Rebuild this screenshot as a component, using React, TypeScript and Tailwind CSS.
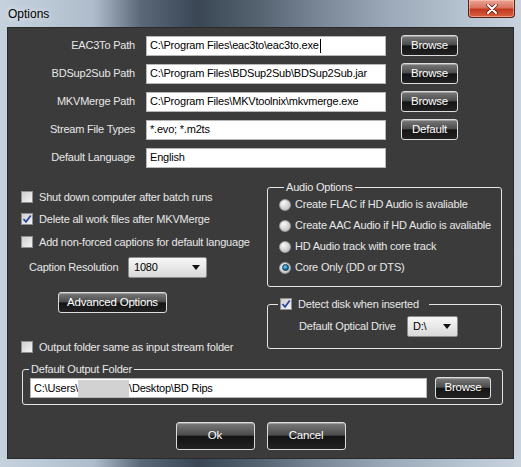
import type { ReactNode } from 'react'

function GlossButton({ children, className = '' }: { children: ReactNode; className?: string }) {
  return (
    <button
      type="button"
      className={`flex items-center justify-center whitespace-nowrap rounded-[3px] border border-[#dcdcdc] bg-[linear-gradient(to_bottom,#7a7a7a_0%,#4c4c4c_46%,#141414_52%,#222222_100%)] text-[11.5px] text-white shadow-[inset_0_1px_0_rgba(255,255,255,0.3)] ${className}`}
    >
      {children}
    </button>
  )
}

function TextBox({ children, className = '' }: { children: ReactNode; className?: string }) {
  return (
    <div
      className={`flex h-[20px] items-center overflow-hidden whitespace-nowrap border border-[#b8b8b8] bg-white pl-[3px] text-black ${className}`}
    >
      {children}
    </div>
  )
}

function CheckBox({ checked = false }: { checked?: boolean }) {
  return (
    <span className="flex h-[12px] w-[12px] shrink-0 items-center justify-center border border-[#8f8f8f] bg-[linear-gradient(135deg,#cfcfcf_0%,#f4f4f4_100%)]">
      {checked && (
        <svg width="10" height="10" viewBox="0 0 10 10">
          <path d="M1.5 5 L4 7.8 L8.8 1.5" fill="none" stroke="#2f46a0" strokeWidth="1.8" />
        </svg>
      )}
    </span>
  )
}

function Radio({ checked = false }: { checked?: boolean }) {
  return (
    <span className="flex h-[12px] w-[12px] shrink-0 items-center justify-center rounded-full border border-[#9a9a9a] bg-[radial-gradient(circle_at_35%_30%,#f8f8f8_0%,#d0d0d0_60%,#b4b4b4_100%)]">
      {checked && (
        <span className="h-[7px] w-[7px] rounded-full border border-[#0b3350] bg-[radial-gradient(circle_at_40%_35%,#7fd0f5_0%,#1a7ab0_55%,#0a3d62_100%)]" />
      )}
    </span>
  )
}

function DropDown({ value, className = '' }: { value: string; className?: string }) {
  return (
    <div
      className={`flex h-[21px] items-center justify-between rounded-[2px] border border-[#8c8c8c] bg-[linear-gradient(to_bottom,#f6f6f6_0%,#e8e8e8_50%,#d8d8d8_100%)] pl-[5px] pr-[6px] text-black ${className}`}
    >
      <span>{value}</span>
      <svg width="8" height="5" viewBox="0 0 8 5">
        <path d="M0 0 H8 L4 5 Z" fill="#111" />
      </svg>
    </div>
  )
}

function PathRow({ label, children, button }: { label: string; children: ReactNode; button?: string }) {
  return (
    <div className="flex h-[21px] items-center">
      <div className="w-[127px] text-right text-[#e8e8e8]">{label}</div>
      <div className="ml-[11px] w-[240px]">
        <TextBox>{children}</TextBox>
      </div>
      {button && <GlossButton className="ml-[15px] h-[21px] w-[57px]">{button}</GlossButton>}
    </div>
  )
}

function CheckRow({ label, checked = false, className = '' }: { label: string; checked?: boolean; className?: string }) {
  return (
    <div className={`flex h-[22px] items-center gap-[6px] text-[#e8e8e8] ${className}`}>
      <CheckBox checked={checked} />
      <span>{label}</span>
    </div>
  )
}

function RadioRow({ label, checked = false }: { label: string; checked?: boolean }) {
  return (
    <div className="flex h-[21px] items-center gap-[4px] text-[#e8e8e8]">
      <Radio checked={checked} />
      <span>{label}</span>
    </div>
  )
}

export default function App() {
  return (
    <div className="h-[467px] w-[521px] overflow-hidden whitespace-nowrap bg-[linear-gradient(to_right,#c6d2de_0%,#aebccb_18%,#5a6878_27%,#3a4654_38%,#566472_50%,#7b8999_62%,#9caab9_75%,#b7c4d1_90%,#c8d3de_100%)] font-['Liberation_Sans',Arial,sans-serif] text-[11px] tracking-[-0.2px]">
      <div className="flex h-[27px] items-start justify-between">
        <div className="pl-[8px] pt-[5px] text-[12px] tracking-normal text-black [text-shadow:0_0_6px_rgba(255,255,255,0.9)]">Options</div>
        <div className="mr-[6px] flex h-[18px] w-[47px] items-center justify-center rounded-b-[4px] border border-t-0 border-[#5b2118] bg-[linear-gradient(to_bottom,#eca596_0%,#d8735f_45%,#c2381f_55%,#d9603e_100%)] shadow-[inset_0_0_0_1px_rgba(255,210,200,0.5)]">
          <svg width="12" height="10" viewBox="0 0 12 10">
            <path d="M2 1 L10 9 M10 1 L2 9" stroke="#5a1a10" strokeWidth="3.4" strokeLinecap="round" />
            <path d="M2 1 L10 9 M10 1 L2 9" stroke="#ffffff" strokeWidth="2" strokeLinecap="round" />
          </svg>
        </div>
      </div>

      <div className="mx-[7px] h-[432px] border border-[#2a2a2a] bg-[#3b3b3b] pt-[7px]">
        <div className="flex flex-col gap-[7px]">
          <PathRow label="EAC3To Path" button="Browse">
            <span>C:\Program Files\eac3to\eac3to.exe</span>
            <span className="ml-px h-[14px] w-px bg-black" />
          </PathRow>
          <PathRow label="BDSup2Sub Path" button="Browse">
            C:\Program Files\BDSup2Sub\BDSup2Sub.jar
          </PathRow>
          <PathRow label="MKVMerge Path" button="Browse">
            C:\Program Files\MKVtoolnix\mkvmerge.exe
          </PathRow>
          <PathRow label="Stream File Types" button="Default">
            *.evo; *.m2ts
          </PathRow>
          <PathRow label="Default Language">English</PathRow>
        </div>

        <div className="mt-[12px] flex">
          <div className="ml-[13px] flex w-[246px] flex-col">
            <CheckRow label="Shut down computer after batch runs" className="mt-[6px]" />
            <CheckRow label="Delete all work files after MKVMerge" checked />
            <CheckRow label="Add non-forced captions for default language" className="mt-px" />
            <div className="mt-[4px] flex h-[21px] items-center text-[#e8e8e8]">
              <span className="ml-[8px] w-[99px]">Caption Resolution</span>
              <DropDown value="1080" className="w-[79px]" />
            </div>
            <GlossButton className="ml-[37px] mt-[14px] h-[21px] w-[109px]">Advanced Options</GlossButton>
            <CheckRow label="Output folder same as input stream folder" className="mt-[23px]" />
          </div>

          <div className="flex w-[235px] flex-col">
            <fieldset className="rounded-[3px] border border-[#e4e4e4] pb-[8px] pl-[11px]">
              <legend className="ml-[5px] px-[2px] leading-[14px] text-[#e8e8e8]">Audio Options</legend>
              <RadioRow label="Create FLAC if HD Audio is avaliable" />
              <RadioRow label="Create AAC Audio if HD Audio is avaliable" />
              <RadioRow label="HD Audio track with core track" />
              <RadioRow label="Core Only (DD or DTS)" checked />
            </fieldset>
            <fieldset className="mt-[10px] rounded-[3px] border border-[#e4e4e4] pb-[11px]">
              <legend className="ml-[10px] flex items-center gap-[6px] px-[2px] leading-[14px] text-[#e8e8e8]">
                <CheckBox checked />
                <span className="pr-[8px]">Detect disk when inserted</span>
              </legend>
              <div className="mt-[5px] flex h-[21px] items-center text-[#e8e8e8]">
                <span className="ml-[31px] w-[108px]">Default Optical Drive</span>
                <DropDown value="D:\" className="w-[51px]" />
              </div>
            </fieldset>
          </div>
        </div>

        <fieldset className="ml-[14px] mt-[4px] w-[481px] rounded-[3px] border border-[#e4e4e4] pb-[5px]">
          <legend className="ml-[6px] px-[2px] leading-[14px] text-[#e8e8e8]">Default Output Folder</legend>
          <div className="mt-px flex h-[22px] items-center">
            <TextBox className="ml-[7px] w-[397px]">
              <span>C:\Users\</span>
              <span className="h-[17px] w-[51px] bg-[#d2d2d2]" />
              <span>\Desktop\BD Rips</span>
            </TextBox>
            <GlossButton className="ml-[8px] h-[22px] w-[56px]">Browse</GlossButton>
          </div>
        </fieldset>

        <div className="mt-[17px] flex justify-center gap-[12px]">
          <GlossButton className="h-[28px] w-[79px]">Ok</GlossButton>
          <GlossButton className="h-[28px] w-[79px]">Cancel</GlossButton>
        </div>
      </div>
    </div>
  )
}
